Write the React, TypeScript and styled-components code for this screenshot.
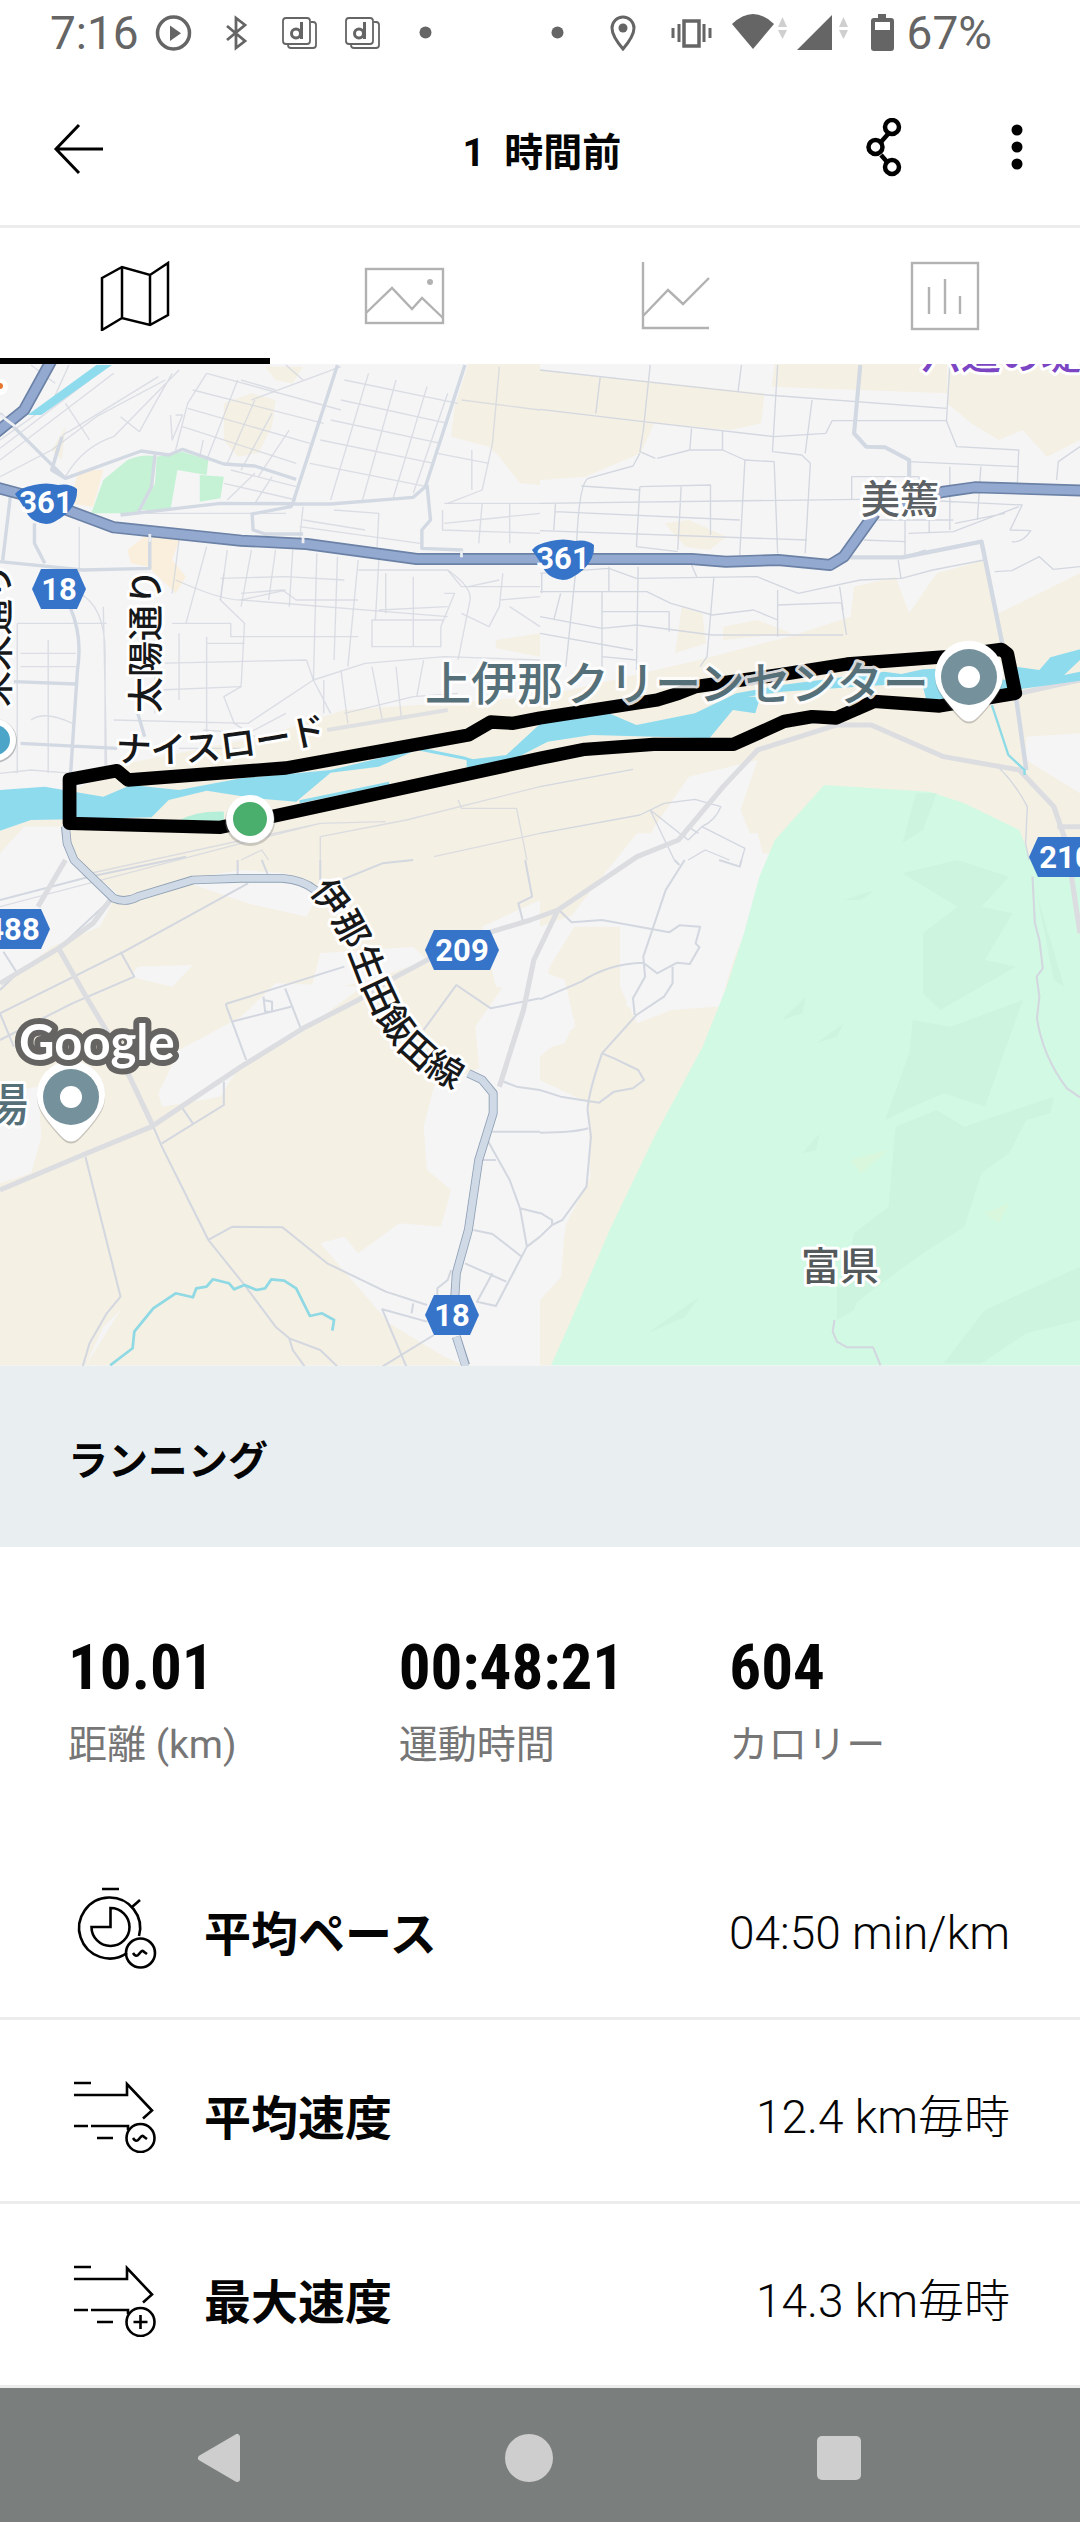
import React from 'react';
import styled, { createGlobalStyle } from 'styled-components';

const jp = '"Noto Sans CJK JP", sans-serif';
const ui = `Roboto, ${jp}`;

const GlobalStyle = createGlobalStyle`
  *, *::before, *::after { box-sizing: border-box; }
  body { margin: 0; background: #fff; color: #050505; font-family: ${ui}; }
  button { margin: 0; padding: 0; border: 0; background: none; color: inherit; font: inherit; cursor: pointer; }
  svg { display: block; }
`;

const Screen = styled.div`
  display: flex;
  flex-direction: column;
  width: 100%;
  overflow: hidden;
`;

/* ---------- status bar ---------- */

const StatusBar = styled.div`
  display: flex;
  justify-content: space-between;
  align-items: center;
  height: 66px;
  padding: 0 88px 0 50px;
  color: #656565;
`;

const StatusGroup = styled.div<{ $gap?: number }>`
  display: flex;
  align-items: center;
  gap: ${(p) => p.$gap ?? 0}px;
`;

const StatusText = styled.span`
  font-size: 46px;
  line-height: 66px;
`;

const StatusIcons = styled.svg`
  flex: none;
  height: 66px;
`;

/* ---------- header ---------- */

const Header = styled.header`
  display: grid;
  grid-template-columns: 1fr auto 1fr;
  align-items: center;
  height: 162px;
  padding: 4px 44px 0 48px;
  border-bottom: 3px solid #ececec;
`;

const Title = styled.h1`
  margin: 0;
  padding-top: 10px;
  font-family: ${ui};
  font-size: 39px;
  font-weight: 700;
  line-height: 56px;
  white-space: pre;
`;

const Actions = styled.div`
  display: flex;
  justify-content: flex-end;
  gap: 108px;
  padding-right: 12px;
`;

const IconButton = styled.button`
  justify-self: start;
`;

/* ---------- tabs ---------- */

const Tabs = styled.nav`
  display: grid;
  grid-template-columns: repeat(4, 1fr);
  height: 136px;
`;

const Tab = styled.button<{ $active?: boolean }>`
  display: flex;
  align-items: center;
  justify-content: center;
  border-top: 6px solid transparent;
  border-bottom: 6px solid ${(p) => (p.$active ? '#000' : 'transparent')};
  color: ${(p) => (p.$active ? '#000' : '#b2b2b2')};
`;

/* ---------- map ---------- */

const MapSvg = styled.svg`
  width: 100%;
  height: auto;
  overflow: hidden;
  background: #f5f5f6;
`;

const MapLabel = styled.text<{ $tone?: string; $size?: number; $halo?: string }>`
  font-family: ${jp};
  font-size: ${(p) => p.$size ?? 36}px;
  font-weight: 500;
  fill: ${(p) => p.$tone ?? '#17181a'};
  stroke: ${(p) => p.$halo ?? '#fff'};
  stroke-width: 6px;
  stroke-linejoin: round;
  paint-order: stroke;
`;

const BadgeText = styled.text`
  font-family: Roboto, sans-serif;
  font-size: 31px;
  font-weight: 700;
  fill: #fff;
  text-anchor: middle;
`;

const Wordmark = styled.text`
  font-family: Lato, sans-serif;
  font-size: 49px;
  font-weight: 700;
  fill: #fff;
  stroke: #666462;
  stroke-width: 12px;
  stroke-linejoin: round;
  paint-order: stroke;
`;

/* ---------- summary ---------- */

const Section = styled.h2`
  display: flex;
  align-items: center;
  height: 181px;
  margin: 0;
  padding: 10px 68px 0;
  background: #e9eef0;
  font-size: 40px;
  font-weight: 700;
  line-height: 56px;
`;

const Summary = styled.dl`
  display: grid;
  grid-template-columns: repeat(3, 1fr);
  margin: 0;
  padding: 86px 20px 66px 68px;
`;

const Stat = styled.div`
  display: flex;
  flex-direction: column-reverse;
  gap: 17px;
`;

const StatName = styled.dt`
  color: #767676;
  font-family: ${ui};
  font-size: 39px;
  font-weight: 400;
  line-height: 50px;
`;

const StatValue = styled.dd`
  margin: 0;
  font-family: "Roboto Condensed", Roboto, sans-serif;
  font-size: 63px;
  font-weight: 700;
  line-height: 70px;
`;

/* ---------- detail rows ---------- */

const Rows = styled.dl`
  margin: 0;
`;

const Row = styled.div`
  display: flex;
  align-items: center;
  height: 184px;
  padding: 0 70px 0 74px;
  border-bottom: 3px solid #ececec;
`;

const RowName = styled.dt`
  flex: 1;
  display: flex;
  align-items: center;
  gap: 46px;
`;

const RowLabel = styled.span`
  padding-top: 8px;
  font-family: ${jp};
  font-size: 47px;
  font-weight: 700;
  line-height: 66px;
`;

const RowValue = styled.dd`
  margin: 0;
  padding-top: 12px;
  font-size: 46px;
  font-weight: 300;
  line-height: 66px;
`;

/* ---------- system navigation ---------- */

const SystemNav = styled.nav`
  display: grid;
  grid-template-columns: repeat(3, 1fr);
  height: 134px;
  padding: 6px 86px 0 64px;
  background: #7a7f7d;
  color: #cdcecd;
`;

const NavButton = styled.button`
  display: flex;
  align-items: center;
  justify-content: center;
`;

/* ---------- icons ---------- */

const LeftStatus = () => (
  <StatusIcons width="292" viewBox="150 0 292 66" fill="none" stroke="currentColor" aria-hidden="true">
    <circle cx="173.500" cy="33" r="16" strokeWidth="3.500" />
    <path d="M170 25.500v15.500l11-7.800z" fill="currentColor" stroke="none" />
    <path d="M227 26l18 15-9 7V18l9 7-18 15" strokeWidth="2.800" />
    {[282, 345].map((x) => (
      <g key={x} strokeWidth="1.800">
        <rect x={x + 1} y="18" width="27" height="26" rx="3" />
        <path d={`M${x + 29} 22h2q3 0 3 3v20q0 3-3 3H${x + 9}q-3 0-3-3`} />
        <circle cx={x + 14} cy="33.500" r="4.500" strokeWidth="3" />
        <path d={`M${x + 19.500} 22v17`} strokeWidth="3" />
      </g>
    ))}
    <circle cx="425.500" cy="32.500" r="6" fill="currentColor" stroke="none" />
  </StatusIcons>
);

const RightStatus = () => (
  <StatusIcons width="356" viewBox="552 0 356 66" fill="none" stroke="currentColor" aria-hidden="true">
    <circle cx="558.500" cy="32.500" r="6" fill="currentColor" stroke="none" />
    <path d="M624 49Q613 36 613 28a11 11 0 0 1 22 0q0 8-11 21z" strokeWidth="3" />
    <circle cx="624" cy="28" r="4.500" fill="currentColor" stroke="none" />
    <rect x="685" y="21" width="15" height="25" strokeWidth="3.500" />
    <path d="M674 28v10M680 24v18M705 24v18M711 28v10" strokeWidth="3" />
    <path d="M733 24q21-20 42 0L754 49z" fill="currentColor" stroke="none" />
    <path d="M779 27l4.500-10 4.500 10zM779 30h9l-4.500 9zM840 27l4.500-10 4.500 10zM840 30h9l-4.500 9z" fill="#cfcfcf" stroke="none" />
    <path d="M798 50h35V15z" fill="currentColor" stroke="none" />
    <path d="M879 14h8v4h5q3 0 3 3v27q0 3-3 3h-17q-3 0-3-3V21q0-3 3-3h4zM876 22v8h15v-8z" fillRule="evenodd" fill="currentColor" stroke="none" />
  </StatusIcons>
);

const BackIcon = () => (
  <svg width="56" height="54" viewBox="0 0 56 54" fill="none" stroke="#000" strokeWidth="3" aria-hidden="true">
    <path d="M31 4L8 28l23 24M8 28h47" />
  </svg>
);

const ShareIcon = () => (
  <svg width="36" height="60" viewBox="0 0 36 60" fill="none" stroke="#000" strokeWidth="4.500" aria-hidden="true">
    <path d="M22 16l-7 8M15 37l7 8" />
    <circle cx="26" cy="9" r="7" />
    <circle cx="9.500" cy="29" r="7" />
    <circle cx="26" cy="49" r="7" />
  </svg>
);

const MoreIcon = () => (
  <svg width="14" height="60" viewBox="0 0 14 60" aria-hidden="true">
    <circle cx="7" cy="12" r="5.500" />
    <circle cx="7" cy="29" r="5.500" />
    <circle cx="7" cy="46" r="5.500" />
  </svg>
);

const tabIcons = [
  {
    name: '地図',
    art: (
      <path d="M9 17L29 6 57 14 75 2v52L57 64 29 57 9 69zM29 6v51M57 14v50" strokeWidth="2.500" />
    ),
  },
  {
    name: '写真',
    art: (
      <>
        <rect x="3" y="8" width="77" height="54" />
        <path d="M3 52l26-25 20 21 10-11 21 20" />
        <circle cx="67" cy="21" r="3" fill="currentColor" stroke="none" />
      </>
    ),
  },
  { name: 'グラフ', art: <path d="M10 1v66h66M10 55l25-26 15 14 26-26" /> },
  {
    name: '統計',
    art: (
      <>
        <rect x="9" y="2" width="66" height="66" />
        <path d="M26 26v27M42 18v35M57 35v18" />
      </>
    ),
  },
];

const Wave = () => <path d="M59 69q3 5 6 1t4-3 4 3" />;
const Plus = () => <path d="M59.500 69h14M66.500 62v14" />;

const PaceIcon = () => (
  <svg width="84" height="84" viewBox="0 0 84 84" fill="none" stroke="#000" strokeWidth="2.600" aria-hidden="true">
    <path d="M28 4h17M58 22l8-7M65 51A30.500 30.500 0 1 0 53 68" />
    <path d="M36.500 42V23a19 19 0 1 1-19 19z" />
    <circle cx="66.500" cy="68" r="14.500" />
    <g transform="translate(0 -1)"><Wave /></g>
  </svg>
);

const SpeedIcon = ({ max }: { max?: boolean }) => (
  <svg width="84" height="84" viewBox="0 0 84 84" fill="none" stroke="#000" strokeWidth="2.600" aria-hidden="true">
    <path d="M0 14h17M0 26h53V15l25 26.500-9 8M0 57h14M17 57h37v4M23 69h16" />
    <circle cx="66.500" cy="69" r="14" />
    {max ? <Plus /> : <Wave />}
  </svg>
);

/* ---------- map drawing ---------- */

const Hexagon = ({ x, y, n }: { x: number; y: number; n: string }) => {
  const w = n.length > 2 ? 37 : 27;
  return (
    <g transform={`translate(${x} ${y})`}>
      <path d={`M${-w} 0L${9 - w} -20H${w - 9}L${w} 0 ${w - 9} 20H${9 - w}z`} fill="#3674c9" />
      <BadgeText y="11">{n}</BadgeText>
    </g>
  );
};

const Shield = ({ x, y, n }: { x: number; y: number; n: string }) => (
  <g transform={`translate(${x} ${y})`}>
    <path d="M-31-9Q-27-15-12-18Q0-21 12-18Q24-20 31-14Q32 0 20 11Q8 21 0 21Q-12 20-18 12Q-23 2-31-9z" fill="#3674c9" />
    <BadgeText y="10">{n}</BadgeText>
  </g>
);

const Pin = ({ x, y }: { x: number; y: number }) => (
  <g transform={`translate(${x} ${y})`}>
    <path d="M-33 6A34 34 0 1 1 33 6Q30 18 9 40Q0 49-9 40Q-30 18-33 6z" fill="#5c5c5c" opacity=".3" transform="translate(0 2)" />
    <path d="M-33 6A34 34 0 1 1 33 6Q30 18 9 40Q0 49-9 40Q-30 18-33 6z" fill="#fff" />
    <circle r="28" fill="#74919c" />
    <circle r="11" fill="#fff" />
  </g>
);

const minorNorthWest = [
  'M150 330Q170 220 200 215L460 50M0 265L260 60 300 15M0 300L330 40M0 240L150 130 200 15M90 15L160 70',
  'M0 350L150 270 280 170 480 60M190 350Q240 260 330 230L520 30M190 130L260 240M350 170L405 215 450 130 500 40',
  'M600 40L545 130 510 270M510 165H530L500 240 495 165M600 40L990 150M560 90L940 190M545 145L900 250M530 200L860 310M590 240L580 290',
  'M690 60L600 300M740 120L660 310M790 160L700 330M840 210L750 350M730 120L990 20M800 90L700 60M880 60L830 15',
  'M1000 60L1330 130M990 120L1300 190M960 180L1280 250M930 240L1260 310M900 310L1240 380M1070 40L960 420M1150 60L1050 430M1240 80L1140 420M1300 100L1200 400',
  'M740 340L660 420M790 350L740 430M650 370L860 420M670 330L860 380',
  'M350 460H830M880 440L870 540M970 450L1100 460 1095 560M870 500L1220 550M880 480L1060 510M1290 430L1568 430M1285 450V510L1568 520M1400 430L1390 550M1290 490L1568 460M1480 430V550',
  'M230 500V700Q310 740 305 900V1220M300 740L310 1240M50 790H310M60 880H220M50 790V1240M140 840V1240M90 1080Q130 1050 210 1090M0 1240L90 1230 210 1240M60 920H220',
  'M520 540L500 700M600 560L540 790M660 570L640 720M730 570L700 740M800 570L780 720M850 570L840 740M920 580L910 960M980 590L970 900M1040 600L1010 920M1100 600L1090 780',
  'M510 660Q640 720 700 720L1300 770M640 655L830 650 1000 660M650 640L640 720 710 790 700 980 650 1010 680 1090M700 700L820 690 860 720 1040 720M1040 630H1300L1340 680H1568',
  'M500 790H670V830H1040M600 850H710M450 830V1060M520 820V1020M600 830V1120M450 910L890 900M460 990L700 980M330 1080L720 1090 910 960 890 900',
  'M1300 630Q1370 680 1365 720L1330 900M1460 640L1450 740 1420 800 1340 760M1290 700H1320L1280 800V860H1080V780H1290M1120 640V760M1200 650V860M1360 680L1450 660M1450 720L1568 710M1480 740L1568 800M1100 750L1300 740',
  'M910 960L1060 910 1290 890 1568 900M940 960V1060M990 930L1010 1090M1080 920L1110 1080M1150 920L1165 1070M1000 1060L1200 1010 1330 1000M910 960L960 1060M1230 900L1210 1010M700 720L830 690',
  'M60 1150L340 1165M520 1165H700M590 1110L720 1120 830 1060M680 1090L740 1130',
  'M1450 20L1430 250 1400 390 1300 430M1340 120L1568 150M1270 280L1420 310M1370 270V390',
  'M930 1430L1180 1380 1568 1280M930 1430V1500M1330 1320L1340 1345 1500 1345 1530 1500M0 1640L700 1450 930 1390 1120 1385M1260 1490L1568 1420M700 1500L760 1470 780 1500M240 1545L930 1390',
];

const minorNorthEast = [
  'M0 30L660 105 1180 145M0 148L300 185 680 230 830 220 848 182H1180L1210 260 1390 270 1385 400M175 50L162 160M320 15L300 210 290 275 335 295M290 280L270 318 140 355 Q110 370 105 600M585 15L575 95',
  'M690 15L675 275 760 285 785 310 770 580M790 120L770 280M440 205L435 270H530L595 300 680 305 690 580M340 295L435 270M530 210V270M595 300L580 585',
  'M0 430L930 418M45 430L40 510M45 455L580 480M0 512L775 540M290 380L280 560 400 575M290 380L495 375V525M410 378L400 570M120 378L290 390M980 480H1200M940 540L1060 545M905 420V350H1100L1110 400',
  'M1190 15L1180 185M1070 305L1390 320M1190 320V510M1280 320L1270 480M1100 420L1400 435 1365 510 1425 512Q1400 550 1370 545M1070 520L1200 515 1390 440M1060 475V590M1130 480V520M1205 490L1350 460',
  'M1500 360L1505 305 1568 260M1320 635L1370 632 1450 590 1490 628 1568 620M1040 600L1048 655M890 590H1060L1120 570',
  'M0 640L200 625 280 655 630 650 750 700 930 660 1050 655 1140 630 1290 600M0 695H310L380 730 500 765 620 750 690 780M0 770L180 805 280 795 500 825 880 825M105 620L75 920M200 620V695M285 620L280 930M180 695V920M440 615L455 650M505 650L485 890 465 920M690 690V830M690 735L875 728 890 825M870 680L880 750M180 755H375V815M40 780L60 700M0 820L270 870M180 890L280 900M5 640V700',
  'M0 1280L270 1228M0 1420L290 1365 360 1330 450 1318 525 1340 Q510 1380 470 1400L430 1440M320 1350L430 1440M320 1350L390 1500M470 1400L595 1465 585 1500M420 1430L430 1400 460 1420M430 1500L480 1470 550 1500',
  'M1330 1220Q1380 1270 1415 1340L1410 1450 1420 1500',
];

const minorSouthWest = [
  'M0 120L260 50 540 -10M0 460L360 275 720 70M0 540L210 430 390 350 350 275M0 460L40 560M0 390L50 340 10 275M170 265L320 120M690 0V50M760 0L780 50M930 0V60M980 65L1110 10 1200 0M1525 0L1545 110 1505 130 1520 190',
  'M655 432L1000 320M655 432L715 600M672 485L845 440M828 385L875 510M765 410L770 455 790 455V425L765 420',
  'M470 850L650 735V665M530 745L560 790M1230 510L1325 375 1425 445 1568 415M248 890L350 1310 310 1360 260 1450 240 1520',
  'M445 800L470 860 605 1140 710 1275 800 1400 840 1435 930 1470 980 1520M605 1140L675 1100 820 1102 950 1210 1120 1295 1240 1335M840 1435L850 1470 885 1520M1240 1385L1110 1348 1180 1520M1195 1360L1200 1330M1110 1520L1260 1425',
  'M1430 815H1568M1450 660L1500 680 1568 690M1415 840L1480 960 1510 1045 1530 1160 1440 1338 1385 1325 1430 1240M1400 900H1440M1375 1110L1430 1122 1515 1190M1350 1210L1470 1265M1310 1230L1300 1260 1270 1285V1310M1510 1045L1568 1060M1530 1160L1568 1130',
];

const minorSouthEast = [
  'M55 150L92 187 180 180 375 217 405 196 465 200 452 250 463 262 435 312 398 308 340 340 300 308 Q200 310 120 365L0 418M420 0L365 90 300 290 305 350 270 415 275 465M385 320V370L360 410 280 465 180 580Q140 700 138 750L148 830 135 980 65 1080 35 1095 0 1130M180 580L215 595 285 630 302 660 270 685 215 695 172 728 60 710 0 690M0 818Q100 818 140 805M0 1058L35 1080V1095M390 0L405 15M520 0L580 20 585 0',
  'M1430 50L1437 190 1450 240 1460 325 1442 350 1450 410 1443 475Q1460 590 1530 685L1568 712',
];

const routePath =
  'M202 1258L340 1232 372 1260 830 1224 1360 1125 1425 1086 1490 1090 1568 1074 1908 1020 1970 1000 2020 980 2290 940 2460 912 2750 890 2908 868 2925 882 2948 1000 2728 1038 2538 1024 2428 1074 2358 1070 2278 1084 2130 1153 1898 1153 1698 1168 1568 1195 780 1372 640 1402 202 1390z';

const TrackMap = () => (
  <MapSvg viewBox="0 0 1080 1002" role="img" aria-label="ランニングルートの地図">
    <defs>
      <path id="nice-road" d="M115 397C160 401 230 400 340 374" />
      <path id="ina-line" d="M309 527C335 558 347 583 356 607C365 631 377 657 389 672C405 697 430 716 482 739" />
    </defs>

    {/* Terrain and roads use a finer grid than the labels laid over them. */}
    <g transform="translate(0 -4) scale(.34439 .33333)" fill="none" strokeLinejoin="round">
      <g fill="#f5f0e4">
        <path d="M650 130L730 100 800 120 790 200 750 280 690 290 650 240zM770 20H880L850 70 800 60zM1360 10H1568V375L1510 370 1450 290 1420 260 1310 230 1320 140zM150 270L190 200 180 300zM1440 840L1568 820V890L1440 865z" />
        <path d="M370 570L430 520 520 540 500 600 540 650 510 700 460 650 430 620 380 610zM230 330L300 330 270 440 200 430z" fill="#faefdc" />
        <path d="M1568 30L2220 100 2210 190 2120 210 1900 190 1860 280 1700 350 1568 360zM2250 10H2750V100L2240 80zM2755 10H3136V240L3040 290 2970 210 2900 240 2820 190 2750 130zM1930 490L2000 480 2110 530 2060 570 1990 560zM1980 740L2040 760 2050 850 1960 880zM2100 800L2200 780 2300 820 2100 840z" />
        <path d="M370 1210L760 1130 1000 1050 1568 1010 2030 900 2290 830 2470 770 2480 680 2600 650 2640 760 2720 640 2860 600 2900 760 3136 640V1120L2980 1130 2980 1200 3136 1300V1520L2900 1500 2200 1480 2150 1350 2200 1200 2000 1250 1900 1400 1850 1520 0 1640V1400z" />
        <path d="M0 1400H1840L1840 1600 1568 1700V3016H0z" />
        <path d="M1568 1500H1770L1700 1545 1568 1530zM1640 1700H1810V1800L1820 1940 2090 1940 2180 1620 2140 1850 2100 1960 2040 2080 1880 2380 1700 2800 1600 3016H1568V2800L1630 2680 1650 2550 1710 2400V2230L1568 2160V2090L1670 2000 1640 1860 1590 1840z" />
      </g>
      <g fill="#f5f5f6">
        <path d="M70 1400H180L220 1500 340 1600 290 1700 150 1760 0 1880V1480zM520 1560L700 1530 830 1540 930 1590 890 1670 720 1630zM930 1780L1200 1760 1240 1800 1080 1860 900 1900zM400 1820L560 1815 500 1880 380 1850zM460 2200L520 2070 700 1970 800 1870 1050 1880 860 2030 700 2110 640 2210 470 2240zM0 2200L110 2180 120 2330 90 2440 0 2470z" />
        <path d="M1260 2180L1568 2050V3016H1350L1290 2990 1130 2890 930 2650 1000 2630 1040 2680 1160 2590 1280 2600 1310 2490 1240 2430 1230 2300zM1380 2000L1568 1720V2220L1400 2210zM1400 1700L1568 1620V1900L1440 1880zM1850 1420L2200 1420 2230 1550 2130 1800 2080 1940 1950 1950 1850 1990 1800 1880 1800 1700 1650 1680 1740 1560z" />
        <path d="M1568 1700L1680 1680 1590 1830 1600 1920 1670 1980 1640 2050 1568 2070zM1568 2200L1700 2230 1715 2450 1640 2600 1630 2750 1568 2820z" />
        <path d="M260 2990L300 2900 350 2850 250 3016z" />
      </g>

      <g fill="#c5f2d4">
        <path d="M370 300Q420 280 450 290L440 380 400 460H265L300 360zM455 290L530 275 605 300 600 345 515 330 495 450H410L450 370zM580 345L650 350 640 415 580 425z" />
      </g>
      <path d="M2393 1275L2700 1295 2800 1330 2960 1410 2990 1490 3136 1530V3016H1600L1650 2900 1770 2610 1900 2330 2040 2060 2110 1880 2160 1720 2205 1550 2250 1440z" fill="#d2f9e3" />
      <g fill="#cdf4df">
        <path d="M2620 1540L2780 1500 2930 1550 2850 1640 2940 1660 2860 1800 2950 1820 2730 1950 2680 1900 2680 1720 2780 1640zM2650 1980L2760 2000 2970 1920 2860 2240 2740 2200 2630 2250 2570 2280 2640 2080zM2600 2300L2720 2250 2800 2300 3060 2210 3050 2260 2980 2280 2930 2380 2850 2440 2800 2600 2680 2680 2520 2800 2430 2880 2480 2620 2580 2540zM2860 2850L3136 2720V2880L2980 2920 2850 3010 2740 3010zM2430 2780L2500 2790 2480 2850 2430 2880zM2270 1980L2340 1910 2330 1960zM2370 2050L2450 1990 2430 2030zM1880 2920L2030 2810 1990 2870zM2330 2380L2380 2320 2370 2370zM2450 1620L2540 1590 2500 1620z" />
        <path d="M2660 1300L2720 1300 2680 1410 2620 1450zM3010 1600L3090 1880 3060 1860z" />
      </g>
      <path d="M2470 2400L2580 2370 2500 2440zM2860 2560L2930 2530 2900 2590z" fill="#d8f7dd" />

      <g stroke="#d3d7df" strokeWidth="4">
        {minorNorthWest.map((d) => <path key={d} d={d} opacity=".8" />)}
        <g transform="translate(1568 0)">{minorNorthEast.map((d) => <path key={d} d={d} />)}</g>
        <g transform="translate(0 1500)" strokeWidth="6">{minorSouthWest.map((d) => <path key={d} d={d} />)}</g>
        <g transform="translate(1568 1500)" strokeWidth="6">{minorSouthEast.map((d) => <path key={d} d={d} />)}</g>
        <path d="M2423 2880L2418 2915 2430 2945 2460 2962H2535L2557 3016" strokeWidth="6" />
      </g>

      <g stroke="#d3d9e2" strokeWidth="10">
        <path d="M0 160L190 355 410 273 490 285 530 268 650 312 740 318 860 358M190 355L150 330 180 230M450 285L440 380 400 460M350 465L640 430 960 432 1200 412 1235 380 1350 15M980 15L850 430 845 440 732 462 735 510 770 522H880M1240 375L1250 480 1225 510V565L1340 570V590M435 520V625L240 630 0 605M30 410L8 600M400 1060L420 1130" />
        <path d="M2498 15L2480 220 2515 260 2570 262 2640 300V360" strokeWidth="12" />
        <path d="M2458 592H2620L2850 545 2910 850M2950 1010L2980 1230" strokeWidth="13" />
        <path d="M100 490V550L130 610M205 745Q240 830 225 930L205 1240M40 965L220 972M60 1150L340 1165" />
        <path d="M950 1110L1300 1050" stroke="#dfe0e2" strokeWidth="12" />
      </g>
      <g stroke="#dcdde1" strokeWidth="15">
        <path d="M0 2490L240 2385 440 2300 700 2120 880 2005 1040 1920 1150 1850 1350 1740 1540 1680 1620 1650 1850 1490 1970 1440 2100 1280 2200 1170 2430 1095 2530 1095 2740 1190 2960 1230 3060 1340 3090 1430 3110 1540 3136 1720M190 1500L110 1640M320 1620L270 1690 170 1765 0 1870M170 1765L250 1910 320 2030 390 2180 445 2300" />
        <path d="M1620 1650L1550 1800 1520 1950 1450 2180M2960 1000L3136 960M3070 1400H3136" />
      </g>

      <path d="M190 1400L195 1450 215 1500 330 1615Q365 1630 400 1610L560 1560 700 1555H820Q880 1560 915 1590M1360 2140L1400 2160 1432 2200V2260L1390 2400 1360 2610 1325 2740 1320 2820M1325 2930L1352 3016" stroke="#8fa0b4" strokeWidth="26" />
      <path d="M190 1395L195 1450 215 1500 330 1615Q365 1630 400 1610L560 1560 700 1555H820Q880 1560 915 1590M1360 2140L1400 2160 1432 2200V2260L1390 2400 1360 2610 1325 2740 1320 2820M1325 2930L1352 3020" stroke="#d0dae6" strokeWidth="21" />

      <g fill="#8fdbee">
        <path d="M0 1290L130 1280 300 1310 380 1275 520 1290 700 1255 960 1230 1220 1165 1100 1220 960 1238 860 1325 740 1315 600 1292 490 1320 440 1372 210 1378 90 1380 0 1412z" />
        <path d="M1355 1200L1470 1185 1568 1092 1768 1060 1848 1095 2018 1060 2138 1000 2270 975 2568 935 2618 942 2680 928 2770 925 2920 960 2950 920 3018 930 3050 892 3136 868V900L3090 945 3136 935V962L2970 986 2900 1012 2690 1020 2678 972 2568 975 2270 995 2170 1010 2208 1010 2193 1060 2128 1050 2060 1135 1718 1125 1590 1145 1460 1215 1355 1222z" />
      </g>
      <path d="M520 1382Q570 1352 650 1355V1390z" fill="#b5efd9" />
      <path d="M1220 1168L1350 1195 1400 1210M870 1325L1130 1270" stroke="#8fdbee" strokeWidth="9" />
      <path d="M80 165L280 15H325L120 165z" fill="#8fdbee" />
      <path d="M2880 1035L2928 1185 2975 1230V1245" stroke="#8ddbe6" strokeWidth="7" />
      <path d="M320 3016L385 2965 390 2915 445 2845 510 2800 560 2812 570 2785 600 2780 618 2758 665 2770 680 2788 710 2775 745 2790 770 2785 788 2758 825 2762 860 2785 900 2868 935 2860 970 2880 965 2912" stroke="#8fd9e4" strokeWidth="8" />

      <g stroke="#6b82a6">
        <path d="M-20 380L60 402 200 452 330 502 700 542 890 552 1210 597H2008L2108 605 2260 600 2410 615 2450 590 2540 460M2620 430L2735 396 2830 382 3156 392M150 0L70 150 -20 225" strokeWidth="36" />
        <path d="M-20 380L60 402 200 452 330 502 700 542 890 552 1210 597H2008L2108 605 2260 600 2410 615 2450 590 2540 460M2620 430L2735 396 2830 382 3156 392M150 0L70 150 -20 225" stroke="#94a9cf" strokeWidth="26" />
      </g>
      <path d="M0 165L45 200M435 522V545M880 530V550M1340 572V592" stroke="#eceef2" strokeWidth="8" />
      <path d={routePath} stroke="#000" strokeWidth="40" />
    </g>

    <circle cx="0" cy="23" r="8" fill="#fff" />
    <circle cx="0" cy="22" r="3" fill="#e8772e" />
    <circle cx="-5" cy="377" r="22" fill="#b9bcbe" />
    <circle cx="-5" cy="376" r="21" fill="#fff" />
    <circle cx="-5" cy="376" r="15" fill="#4ba5c8" />
    <circle cx="250" cy="457" r="25" fill="#777" opacity=".35" />
    <circle cx="250" cy="455" r="24" fill="#fff" />
    <circle cx="250" cy="455" r="17" fill="#4aae6d" />

    <Shield x={46} y={139} n="361" />
    <Shield x={563} y={195} n="361" />
    <Hexagon x={59} y={225} n="18" />
    <Hexagon x={13} y={565} n="488" />
    <Hexagon x={462} y={586} n="209" />
    <Hexagon x={452} y={951} n="18" />
    <Hexagon x={1066} y={493} n="210" />

    <MapLabel x="921" y="5" $size={40} $tone="#7b45c4">六道の堤</MapLabel>
    <MapLabel x="861" y="149" $size={39} $tone="#5b6164">美篶</MapLabel>
    <MapLabel x="801" y="916" $size={39} $tone="#54595b">富県</MapLabel>
    <MapLabel x="425" y="336" $size={46} $tone="#567079" $halo="#ffffffd9">上伊那クリーンセンター</MapLabel>
    <MapLabel x="-18" y="757" $size={46} $tone="#567079">場</MapLabel>
    <MapLabel transform="translate(159 349) rotate(-90)">太陽通り</MapLabel>
    <MapLabel transform="translate(9 343) rotate(-90)">未来通り</MapLabel>
    <MapLabel><textPath href="#nice-road">ナイスロード</textPath></MapLabel>
    <MapLabel><textPath href="#ina-line">伊那生田飯田線</textPath></MapLabel>

    <Pin x={969} y={313} />
    <Pin x={71} y={733} />
    <Wordmark x="19" y="696">Google</Wordmark>
  </MapSvg>
);

/* ---------- page ---------- */

const stats = [
  { name: '距離 (km)', value: '10.01' },
  { name: '運動時間', value: '00:48:21' },
  { name: 'カロリー', value: '604' },
];

const details = [
  { name: '平均ペース', value: '04:50 min/km', icon: <PaceIcon /> },
  { name: '平均速度', value: '12.4 km毎時', icon: <SpeedIcon /> },
  { name: '最大速度', value: '14.3 km毎時', icon: <SpeedIcon max /> },
];

export default function App() {
  return (
    <Screen>
      <GlobalStyle />
      <StatusBar>
        <StatusGroup $gap={11}>
          <StatusText>7:16</StatusText>
          <LeftStatus />
        </StatusGroup>
        <StatusGroup>
          <RightStatus />
          <StatusText>67%</StatusText>
        </StatusGroup>
      </StatusBar>

      <Header>
        <IconButton aria-label="戻る"><BackIcon /></IconButton>
        <Title>1  時間前</Title>
        <Actions>
          <IconButton aria-label="共有"><ShareIcon /></IconButton>
          <IconButton aria-label="その他"><MoreIcon /></IconButton>
        </Actions>
      </Header>

      <Tabs>
        {tabIcons.map((tab, i) => (
          <Tab key={tab.name} $active={i === 0} aria-label={tab.name}>
            <svg width="84" height="70" viewBox="0 0 84 70" fill="none" stroke="currentColor" strokeWidth="2.400" aria-hidden="true">
              {tab.art}
            </svg>
          </Tab>
        ))}
      </Tabs>

      <TrackMap />

      <Section>ランニング</Section>
      <Summary>
        {stats.map((s) => (
          <Stat key={s.name}>
            <StatName>{s.name}</StatName>
            <StatValue>{s.value}</StatValue>
          </Stat>
        ))}
      </Summary>

      <Rows>
        {details.map((d) => (
          <Row key={d.name}>
            <RowName>
              {d.icon}
              <RowLabel>{d.name}</RowLabel>
            </RowName>
            <RowValue>{d.value}</RowValue>
          </Row>
        ))}
      </Rows>

      <SystemNav>
        <NavButton aria-label="戻る">
          <svg width="44" height="50" viewBox="0 0 44 50" fill="currentColor" stroke="currentColor" strokeWidth="6" strokeLinejoin="round" aria-hidden="true">
            <path d="M4 25L40 4v42z" />
          </svg>
        </NavButton>
        <NavButton aria-label="ホーム">
          <svg width="48" height="48" viewBox="0 0 48 48" fill="currentColor" aria-hidden="true">
            <circle cx="24" cy="24" r="24" />
          </svg>
        </NavButton>
        <NavButton aria-label="最近のアプリ">
          <svg width="44" height="44" viewBox="0 0 44 44" fill="currentColor" aria-hidden="true">
            <rect width="44" height="44" rx="5" />
          </svg>
        </NavButton>
      </SystemNav>
    </Screen>
  );
}
